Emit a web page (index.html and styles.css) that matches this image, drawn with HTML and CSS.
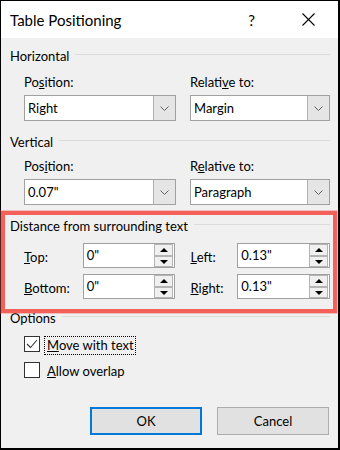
FILE: index.html
```html
<!DOCTYPE html>
<html lang="en">
<head>
  <meta charset="UTF-8">
  <title>Table Positioning</title>
  <link rel="stylesheet" href="styles.css">
</head>
<body>
  <div class="dialog">
    <div class="titlebar">
      <span class="title">Table Positioning</span>
      <span class="help">?</span>
      <svg class="close" width="13" height="13" viewBox="0 0 13 13">
        <path d="M0.5 0.5 L12.5 12.5 M12.5 0.5 L0.5 12.5" stroke="#000" stroke-width="1.1" fill="none"/>
      </svg>
    </div>

    <div class="content">
      <!-- Horizontal -->
      <div class="group-head first"><span>Horizontal</span><div class="rule"></div></div>
      <div class="fields">
        <div class="field">
          <label>Po<u>s</u>ition:</label>
          <div class="combo wide">
            <span class="value">Right</span>
            <span class="drop"><svg width="9" height="5" viewBox="0 0 9 5"><path d="M0.5 0.5 L4.5 4.5 L8.5 0.5" stroke="#606060" fill="none"/></svg></span>
          </div>
        </div>
        <div class="field">
          <label>Relati<u>v</u>e to:</label>
          <div class="combo">
            <span class="value">Margin</span>
            <span class="drop"><svg width="9" height="5" viewBox="0 0 9 5"><path d="M0.5 0.5 L4.5 4.5 L8.5 0.5" stroke="#606060" fill="none"/></svg></span>
          </div>
        </div>
      </div>

      <!-- Vertical -->
      <div class="group-head"><span>Vertical</span><div class="rule"></div></div>
      <div class="fields tight">
        <div class="field">
          <label>Pos<u>i</u>tion:</label>
          <div class="combo wide">
            <span class="value">0.07"</span>
            <span class="drop"><svg width="9" height="5" viewBox="0 0 9 5"><path d="M0.5 0.5 L4.5 4.5 L8.5 0.5" stroke="#606060" fill="none"/></svg></span>
          </div>
        </div>
        <div class="field">
          <label>R<u>e</u>lative to:</label>
          <div class="combo">
            <span class="value">Paragraph</span>
            <span class="drop"><svg width="9" height="5" viewBox="0 0 9 5"><path d="M0.5 0.5 L4.5 4.5 L8.5 0.5" stroke="#606060" fill="none"/></svg></span>
          </div>
        </div>
      </div>

      <!-- Distance from surrounding text -->
      <div class="group-head"><span>Distance from surrounding text</span><div class="rule"></div></div>
      <div class="spins">
        <div class="spin-row">
          <label class="spin-label"><u>T</u>op:</label>
          <div class="spin"><span class="value">0"</span>
            <span class="arrows"><span class="up"></span><span class="down"></span></span>
          </div>
          <label class="spin-label right"><u>L</u>eft:</label>
          <div class="spin"><span class="value">0.13"</span>
            <span class="arrows"><span class="up"></span><span class="down"></span></span>
          </div>
        </div>
        <div class="spin-row">
          <label class="spin-label"><u>B</u>ottom:</label>
          <div class="spin"><span class="value">0"</span>
            <span class="arrows"><span class="up"></span><span class="down"></span></span>
          </div>
          <label class="spin-label right"><u>R</u>ight:</label>
          <div class="spin"><span class="value">0.13"</span>
            <span class="arrows"><span class="up"></span><span class="down"></span></span>
          </div>
        </div>
      </div>

      <!-- Options -->
      <div class="group-head options"><span>Options</span><div class="rule"></div></div>
      <div class="checks">
        <div class="check-row">
          <span class="box">
            <svg width="14" height="14" viewBox="0 0 14 14"><path d="M2 7 L5.5 10.5 L12 3" stroke="#333" stroke-width="1.1" fill="none"/></svg>
          </span>
          <span class="check-label focus"><u>M</u>ove with text</span>
        </div>
        <div class="check-row">
          <span class="box"></span>
          <span class="check-label"><u>A</u>llow overlap</span>
        </div>
      </div>

      <div class="buttons">
        <button class="btn default">OK</button>
        <button class="btn">Cancel</button>
      </div>
    </div>

    <!-- highlight annotation -->
    <div class="highlight"></div>
  </div>
</body>
</html>
```

FILE: styles.css
```css
* {
  box-sizing: border-box;
}
body {
  margin: 0;
  padding: 0;
  font-family: Lato, 'Noto Sans', Arial, sans-serif;
  font-size: 13px;
  color: #000;
  background-color: #fff;
}
.dialog {
  position: relative;
  width: 340px;
  height: 450px;
  border: 1px solid #000;
  border-right-width: 2px;
  border-bottom-width: 2px;
  background-color: #f0f0f0;
  display: flex;
  flex-direction: column;
}
.titlebar {
  height: 37px;
  background-color: #fff;
  display: flex;
  align-items: center;
  padding-left: 9px;
  flex-shrink: 0;
}
.title {
  font-size: 15px;
  flex: 1;
}
.help {
  font-size: 15px;
  margin-right: 47px;
}
.close {
  margin-right: 23px;
}
.content {
  padding: 0 8px 0 9px;
  display: flex;
  flex-direction: column;
}
.group-head {
  height: 16px;
  line-height: 16px;
  display: flex;
  align-items: center;
  gap: 6px;
  margin-top: 13px;
  white-space: nowrap;
}
.group-head.first {
  margin-top: 10px;
}
.group-head.options {
  margin-top: 11px;
}
.rule {
  flex: 1;
  height: 1px;
  background-color: #dcdcdc;
  margin-top: -3px;
}
.fields {
  display: grid;
  grid-template-columns: 152px 140px;
  column-gap: 14px;
  padding-left: 14px;
  margin-top: 10px;
}
.fields.tight {
  margin-top: 8px;
}
.field label {
  display: block;
  height: 16px;
  line-height: 16px;
  margin-bottom: 5px;
}
.combo {
  height: 26px;
  border: 1px solid #a0a0a0;
  background-color: #fff;
  display: flex;
  align-items: stretch;
}
.combo .value {
  flex: 1;
  line-height: 24px;
  padding-left: 3px;
}
.combo .drop {
  width: 22px;
  background-color: #e5e5e5;
  border-left: 1px solid #b0b0b0;
  display: flex;
  align-items: center;
  justify-content: center;
}
.spins {
  margin-top: 9px;
  padding-left: 14px;
  display: flex;
  flex-direction: column;
  gap: 6px;
}
.spin-row {
  display: flex;
  align-items: center;
  height: 25px;
}
.spin-label {
  width: 59px;
  padding-top: 3px;
}
.spin-label.right {
  width: 47px;
  margin-left: 15px;
}
.spin {
  width: 93px;
  height: 25px;
  border: 1px solid #a0a0a0;
  background-color: #fff;
  display: flex;
  align-items: stretch;
}
.spin .value {
  flex: 1;
  line-height: 23px;
  padding-left: 3px;
}
.arrows {
  width: 19px;
  margin: 0 1px 0 0;
  display: flex;
  flex-direction: column;
}
.arrows span {
  flex: 1;
  border: 1px solid #b4b4b4;
  background-color: #f0f0f0;
  position: relative;
}
.arrows .up::after,
.arrows .down::after {
  content: "";
  position: absolute;
  left: 5px;
  top: 3px;
  border-left: 4px solid transparent;
  border-right: 4px solid transparent;
}
.arrows .up::after {
  border-bottom: 4px solid #000;
}
.arrows .down::after {
  border-top: 4px solid #000;
}
.checks {
  margin-top: 10px;
  padding-left: 14px;
  display: flex;
  flex-direction: column;
  gap: 7px;
}
.check-row {
  display: flex;
  align-items: flex-start;
  height: 19px;
}
.box {
  width: 16px;
  height: 16px;
  border: 1px solid #333;
  background-color: #fff;
  display: flex;
  align-items: center;
  justify-content: center;
}
.check-label {
  margin-left: 4px;
  height: 19px;
  line-height: 17px;
  padding: 0 1px 0 2px;
  border: 1px solid transparent;
}
.check-label.focus {
  border: 1px dotted #000;
}
.buttons {
  margin-top: 26px;
  display: flex;
  justify-content: flex-end;
  gap: 15px;
  padding-right: 1px;
}
.btn {
  width: 112px;
  height: 28px;
  font-family: inherit;
  font-size: 13px;
  color: #000;
  background-color: #e1e1e1;
  border: 1px solid #adadad;
  padding: 0;
}
.btn.default {
  border: 2px solid #0078d7;
}
.highlight {
  position: absolute;
  left: 0;
  top: 210px;
  width: 336px;
  height: 102px;
  border: 4px solid #f4605a;
  box-shadow: 0 0 0 1px rgba(244, 96, 90, 0.35);
}
```
